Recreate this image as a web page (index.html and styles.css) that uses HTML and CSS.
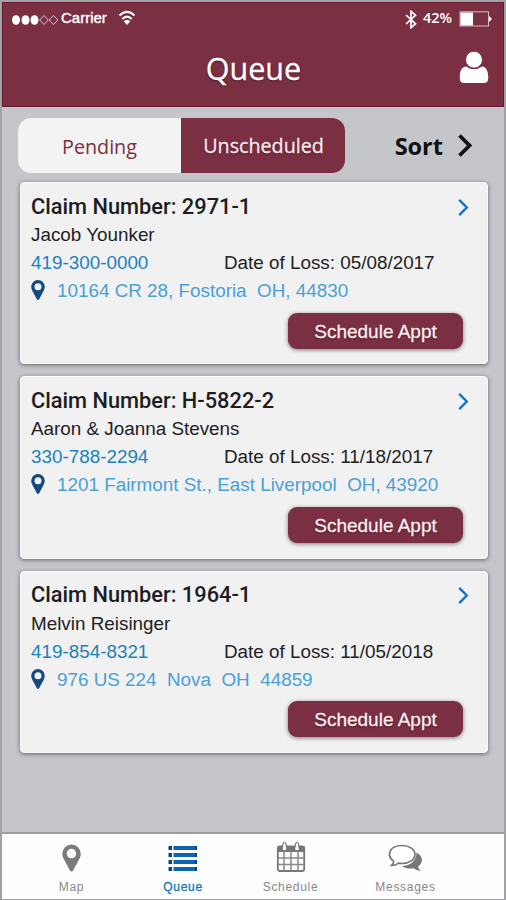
FILE: index.html
```html
<!DOCTYPE html>
<html lang="en">
<head>
    <meta charset="UTF-8">
    <meta name="viewport" content="width=device-width, initial-scale=1.0">
    <title>Queue</title>
    <link rel="stylesheet" href="styles.css">
</head>
<body>
    <!-- Shared icons -->
    <svg class="sprite" aria-hidden="true">
        <symbol id="pin" viewBox="0 0 14 20">
            <path fill-rule="evenodd" d="M7 0a6.8 6.8 0 0 1 6.8 6.8c0 1.500-.5 2.800-1.100 4L8.200 19.300q-1.200 1.400-2.400 0L1.300 10.800C.7 9.600.2 8.300.2 6.800A6.800 6.800 0 0 1 7 0zm0 3.200a3.500 3.500 0 1 0 0 7a3.500 3.500 0 0 0 0-7z"/>
        </symbol>
        <symbol id="chevron" viewBox="0 0 12 20">
            <path d="M2 2l8 8l-8 8" fill="none" stroke="currentColor"/>
        </symbol>
    </svg>

    <div class="screen">
        <!-- Header -->
        <header class="header">
            <div class="status-bar">
                <svg class="signal" width="48" height="12" viewBox="0 0 48 12">
                    <g fill="#fff">
                        <ellipse cx="5" cy="6" rx="4" ry="4.800"/>
                        <ellipse cx="14.500" cy="6" rx="4" ry="4.800"/>
                        <ellipse cx="23.500" cy="6" rx="4" ry="4.800"/>
                    </g>
                    <g fill="none" stroke="#dcc3cb">
                        <path d="M33 1.500l4.300 4.500l-4.300 4.500l-4.300-4.500zM42.500 1.500l4.300 4.500l-4.300 4.500l-4.300-4.500z" stroke-linejoin="round"/>
                    </g>
                </svg>
                <span class="carrier">Carrier</span>
                <svg class="wifi" width="18" height="16" viewBox="0 0 18 16">
                    <g fill="none" stroke="#fff" stroke-width="2">
                        <path d="M1.500 5.500Q9-1.800 16.500 5.500"/>
                        <path d="M4.300 9Q9 4.300 13.700 9"/>
                    </g>
                    <path d="M5.700 11.300Q9 8.500 12.300 11.300L9 15z" fill="#fff"/>
                </svg>
                <svg class="bluetooth" width="12" height="19" viewBox="0 0 12 19">
                    <path d="M1 5l9.500 8.800L6 17.700V1.300l4.500 3.900L1 14" fill="none" stroke="#fff" stroke-width="1.700"/>
                </svg>
                <span class="percent">42%</span>
                <svg class="battery" width="34" height="16" viewBox="0 0 34 16">
                    <rect x="1" y=".8" width="28.500" height="14.200" fill="none" stroke="#dcb9c4"/>
                    <rect x="1.500" y="1.500" width="12.500" height="13" fill="#fff"/>
                    <path d="M30 5l3 3l-3 3z" fill="#fff"/>
                </svg>
            </div>
            <div class="title-bar">
                <h1>Queue</h1>
                <svg class="user" width="30" height="33" viewBox="0 0 30 33">
                    <path fill="#fff" d="M7 15.500C2.500 16 .8 20.500.8 25.500v2Q.8 32 5.500 32h19q4.700 0 4.700-4.500v-2c0-5-1.700-9.500-6.200-10q-8 5.500-16 0z"/>
                    <circle cx="15" cy="8.700" r="8.400" fill="#fff" stroke="#7a2f42" stroke-width=".8"/>
                </svg>
            </div>
        </header>

        <!-- Tabs and sort -->
        <div class="toolbar">
            <div class="tabs">
                <button class="tab">Pending</button>
                <button class="tab active">Unscheduled</button>
            </div>
            <a class="sort" href="#">
                <span>Sort</span>
                <svg class="sort-arrow"><use href="#chevron"/></svg>
            </a>
        </div>

        <!-- Claims -->
        <main class="claims">
            <section class="card">
                <div class="card-top">
                    <h2>Claim Number: 2971-1</h2>
                    <svg class="arrow"><use href="#chevron"/></svg>
                </div>
                <p class="name">Jacob Younker</p>
                <div class="details">
                    <a class="phone" href="#">419-300-0000</a>
                    <span class="loss">Date of Loss: 05/08/2017</span>
                </div>
                <div class="address">
                    <svg class="pin"><use href="#pin"/></svg>
                    <a href="#">10164 CR 28, Fostoria&nbsp; OH, 44830</a>
                </div>
                <button class="schedule">Schedule Appt</button>
            </section>

            <section class="card">
                <div class="card-top">
                    <h2>Claim Number: H-5822-2</h2>
                    <svg class="arrow"><use href="#chevron"/></svg>
                </div>
                <p class="name">Aaron &amp; Joanna Stevens</p>
                <div class="details">
                    <a class="phone" href="#">330-788-2294</a>
                    <span class="loss">Date of Loss: 11/18/2017</span>
                </div>
                <div class="address">
                    <svg class="pin"><use href="#pin"/></svg>
                    <a href="#">1201 Fairmont St., East Liverpool&nbsp; OH, 43920</a>
                </div>
                <button class="schedule">Schedule Appt</button>
            </section>

            <section class="card">
                <div class="card-top">
                    <h2>Claim Number: 1964-1</h2>
                    <svg class="arrow"><use href="#chevron"/></svg>
                </div>
                <p class="name">Melvin Reisinger</p>
                <div class="details">
                    <a class="phone" href="#">419-854-8321</a>
                    <span class="loss">Date of Loss: 11/05/2018</span>
                </div>
                <div class="address">
                    <svg class="pin"><use href="#pin"/></svg>
                    <a href="#">976 US 224&nbsp; Nova&nbsp; OH&nbsp; 44859</a>
                </div>
                <button class="schedule">Schedule Appt</button>
            </section>
        </main>

        <!-- Bottom navigation -->
        <nav class="bottom-nav">
            <a href="#">
                <svg class="nav-pin" width="19" height="28"><use href="#pin"/></svg>
                <span>Map</span>
            </a>
            <a href="#" class="current">
                <svg width="30" height="30" viewBox="0 0 30 30">
                    <g fill="#0d64b0">
                        <path d="M5.500 3h23v4h-23zM5.500 10h23v4h-23zM5.500 17h23v4h-23zM5.500 24h23v4h-23z"/>
                    </g>
                    <g fill="#07428e">
                        <path d="M.5 3h3.500v4H.5zM.5 10h3.500v4H.5zM.5 17h3.500v4H.5zM.5 24h3.500v4H.5zM27 3h2v4h-2zM27 10h2v4h-2zM27 17h2v4h-2zM27 24h2v4h-2z"/>
                    </g>
                </svg>
                <span>Queue</span>
            </a>
            <a href="#">
                <svg width="30" height="32" viewBox="0 0 30 32">
                    <path d="M1.500 5h27v6h-27z" fill="#777"/>
                    <rect x="1.800" y="5.500" width="26.400" height="24.500" rx="2" fill="none" stroke="#777" stroke-width="1.800"/>
                    <path d="M8 10v20M15 10v20M22 10v20M2 17h26M2 23.500h26" fill="none" stroke="#888" stroke-width="1.500"/>
                    <path d="M6 9.500L7 3Q8.500-.5 10 3l1 6.500zM18.500 9.500l1-6.500Q21-.5 22.500 3l1 6.500z" fill="#fff" stroke="#777" stroke-width="1.200"/>
                </svg>
                <span>Schedule</span>
            </a>
            <a href="#">
                <svg width="36" height="30" viewBox="0 0 36 30">
                    <path fill="#777" d="M28.500 9.500c6.500 3.500 7.500 10 1.500 14q.5 2.500 3 4.500q-4.500 0-7.500-2.700c-4.500.8-8.500 0-11.500-2.300c8 0 14.500-5 14.500-13.500z"/>
                    <path fill="#fff" stroke="#777" stroke-width="1.700" d="M14 2.500c7.500 0 13 4 13 9s-5.500 9-13 9q-2 0-3.500-.4Q7.500 22.500 3.500 22.500q2-1.700 2.200-4.200C-2.500 12 2 2.500 14 2.500z"/>
                </svg>
                <span>Messages</span>
            </a>
        </nav>
    </div>
</body>
</html>
```

FILE: styles.css
```css
* {
    margin: 0;
    padding: 0;
    box-sizing: border-box;
}

body {
    font-family: "Liberation Sans", Arial, sans-serif;
    background-color: #c5c6ca;
}

a {
    text-decoration: none;
    color: inherit;
}

button {
    border: none;
    cursor: pointer;
}

svg {
    display: block;
    flex-shrink: 0;
}

.sprite {
    position: absolute;
    width: 0;
    height: 0;
}

.screen {
    display: flex;
    flex-direction: column;
    width: 506px;
    height: 900px;
    border: 2px solid #a3a2a6;
    border-bottom-width: 1px;
    background-color: #c5c6ca;
}

/* Header */
.header {
    height: 105px;
    background-color: #7a2f42;
    border: 1px solid #6b1730;
    color: white;
}

.status-bar {
    display: flex;
    align-items: center;
    height: 31px;
    padding: 0 10px 0 8px;
    font-size: 15px;
}

.signal {
    margin-top: 3px;
}

.carrier {
    margin-left: 2px;
    margin-top: -2px;
    -webkit-text-stroke: 0.4px white;
}

.wifi {
    margin-left: 11px;
    margin-top: -1px;
}

.bluetooth {
    margin-left: auto;
    margin-top: 2px;
}

.percent {
    margin-left: 6px;
    margin-top: -2px;
    font-family: "Open Sans", sans-serif;
    font-size: 14.500px;
    font-weight: 600;
}

.battery {
    margin-left: 7px;
}

.title-bar {
    display: grid;
    grid-template-columns: 45px 1fr 47px;
    align-items: center;
    height: 66px;
}

.title-bar h1 {
    grid-column: 2;
    margin-left: 3px;
    margin-top: 1px;
    text-align: center;
    font-family: "Open Sans", sans-serif;
    font-size: 30.500px;
    font-weight: 400;
    -webkit-text-stroke: 0.3px white;
    text-shadow: 0 1px 2px #52142a;
}

.user {
    margin-left: 3px;
}

/* Tabs and sort */
.toolbar {
    display: flex;
    align-items: center;
    height: 75px;
    padding: 2px 32px 0 16px;
}

.tabs {
    display: flex;
    width: 327px;
    height: 55px;
    border-radius: 13px;
    overflow: hidden;
}

.tab {
    width: 163px;
    padding-top: 2px;
    background-color: #f3f3f3;
    color: #7a2f42;
    font-family: "Open Sans", sans-serif;
    font-size: 19.700px;
}

.tab.active {
    width: 164px;
    padding-top: 0;
    padding-left: 1px;
    background-color: #7a2f42;
    color: #f7eaed;
    -webkit-text-stroke: 0.3px #f7eaed;
    text-shadow: 0 1px 2px #52142a;
}

.sort {
    display: flex;
    align-items: center;
    margin-left: auto;
    gap: 14px;
    color: #111;
    font-family: "Open Sans", sans-serif;
    font-size: 23.500px;
    font-weight: 700;
}

.sort-arrow {
    width: 15px;
    height: 25px;
    stroke-width: 3px;
}

/* Claim cards */
.claims {
    display: flex;
    flex-direction: column;
    flex: 1;
    gap: 12px;
    padding: 0 16px 0 18px;
}

.card {
    display: flex;
    flex-direction: column;
    height: 182.300px;
    padding: 10px 18px 0 10px;
    background-color: #f1f1f2;
    border: 1px solid #fafafa;
    border-radius: 4px;
    box-shadow: 0 1px 4px rgba(0, 0, 0, 0.5);
    color: #222;
    font-size: 18.850px;
}

.card-top {
    display: flex;
    justify-content: space-between;
    align-items: center;
    height: 28px;
}

.card h2 {
    margin-top: -2px;
    font-family: Roboto, sans-serif;
    font-size: 21.800px;
    font-weight: 500;
    color: #1d1d1f;
}

.arrow {
    width: 12px;
    height: 19px;
    color: #1672c4;
    stroke-width: 2.500px;
}

.name {
    height: 28px;
    line-height: 28.500px;
}

.details {
    display: grid;
    grid-template-columns: 193px 1fr;
    height: 28px;
    line-height: 27px;
}

.phone {
    color: #1c82bd;
}

.address {
    display: flex;
    align-items: center;
    height: 28px;
    gap: 12px;
    color: #4ba0d4;
}

.pin {
    width: 14px;
    height: 20px;
    margin-top: -2px;
    fill: #134a80;
}

.schedule {
    align-self: flex-end;
    width: 175px;
    height: 36px;
    margin: 7.500px 6px 0 0;
    padding-top: 2px;
    border-radius: 9px;
    background-color: #7a2f42;
    box-shadow: 0 1px 4px rgba(0, 0, 0, 0.5);
    color: #fbeef1;
    font-family: "Liberation Sans", Arial, sans-serif;
    font-size: 19px;
    -webkit-text-stroke: 0.3px #fbeef1;
    text-shadow: 0 1px 2px #52142a;
}

/* Bottom navigation */
.bottom-nav {
    display: grid;
    grid-template-columns: 125px 98px 117px 113px;
    justify-content: start;
    height: 67px;
    padding-left: 7px;
    border-top: 2px solid #9d9da1;
    background-color: #fefefe;
}

.bottom-nav a {
    display: flex;
    flex-direction: column;
    align-items: center;
    justify-content: flex-end;
    gap: 7px;
    padding-bottom: 5px;
    color: #88888a;
    font-size: 12px;
    letter-spacing: 0.7px;
}

.bottom-nav .nav-pin {
    margin-bottom: 1px;
    fill: #7c7c7c;
}

.bottom-nav .current {
    color: #1277bd;
    -webkit-text-stroke: 0.3px #1277bd;
}
```
